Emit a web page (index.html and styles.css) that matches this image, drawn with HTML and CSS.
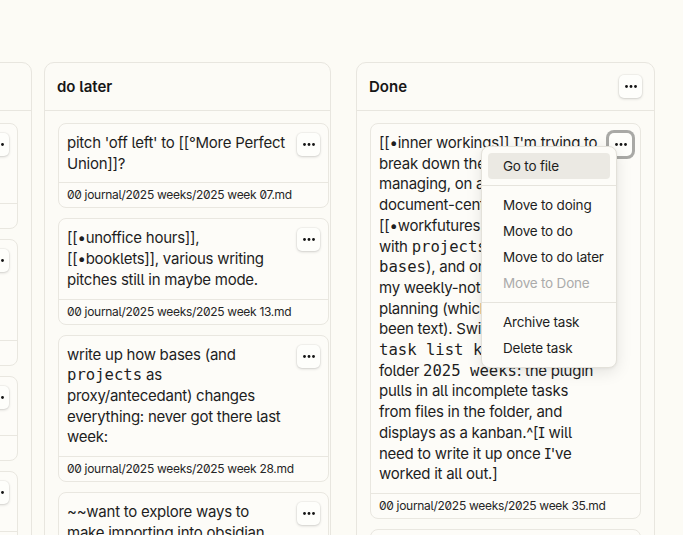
FILE: index.html
```html
<!DOCTYPE html>
<html lang="en">
<head>
<meta charset="utf-8">
<title>Task board</title>
<link rel="stylesheet" href="styles.css">
</head>
<body>
<div class="board">
  <section class="column col-wide">
    <header class="col-head"><h2 class="col-title">doing</h2></header>
    <div class="col-body">
      <article class="card">
        <div class="card-main">
          <p class="task-text">draft the outline for the next newsletter issue and send to editor</p>
          <button class="dots" aria-label="Task menu"><svg width="12" height="3" viewBox="0 0 12 3"><circle cx="1.5" cy="1.5" r="1.4"/><circle cx="6" cy="1.5" r="1.4"/><circle cx="10.5" cy="1.5" r="1.4"/></svg></button>
        </div>
        <div class="card-path">00 journal/2025 weeks/2025 week 30.md</div>
      </article>
      <article class="card">
        <div class="card-main">
          <p class="task-text">review the notes from the workshop and turn them into a short piece for the blog this month</p>
          <button class="dots" aria-label="Task menu"><svg width="12" height="3" viewBox="0 0 12 3"><circle cx="1.5" cy="1.5" r="1.4"/><circle cx="6" cy="1.5" r="1.4"/><circle cx="10.5" cy="1.5" r="1.4"/></svg></button>
        </div>
        <div class="card-path">00 journal/2025 weeks/2025 week 31.md</div>
      </article>
      <article class="card">
        <div class="card-main">
          <p class="task-text">tidy up the projects folder and archive the finished ones</p>
          <button class="dots" aria-label="Task menu"><svg width="12" height="3" viewBox="0 0 12 3"><circle cx="1.5" cy="1.5" r="1.4"/><circle cx="6" cy="1.5" r="1.4"/><circle cx="10.5" cy="1.5" r="1.4"/></svg></button>
        </div>
        <div class="card-path">00 journal/2025 weeks/2025 week 33.md</div>
      </article>
      <article class="card">
        <div class="card-main">
          <p class="task-text">follow up on the conference proposal</p>
          <button class="dots" aria-label="Task menu"><svg width="12" height="3" viewBox="0 0 12 3"><circle cx="1.5" cy="1.5" r="1.4"/><circle cx="6" cy="1.5" r="1.4"/><circle cx="10.5" cy="1.5" r="1.4"/></svg></button>
        </div>
        <div class="card-path">00 journal/2025 weeks/2025 week 34.md</div>
      </article>
    </div>
  </section>

  <section class="column col-narrow">
    <header class="col-head"><h2 class="col-title">do later</h2></header>
    <div class="col-body">
      <article class="card">
        <div class="card-main">
          <p class="task-text">pitch 'off left' to [[°More Perfect Union]]?</p>
          <button class="dots" aria-label="Task menu"><svg width="12" height="3" viewBox="0 0 12 3"><circle cx="1.5" cy="1.5" r="1.4"/><circle cx="6" cy="1.5" r="1.4"/><circle cx="10.5" cy="1.5" r="1.4"/></svg></button>
        </div>
        <div class="card-path">00 journal/2025 weeks/2025 week 07.md</div>
      </article>
      <article class="card">
        <div class="card-main">
          <p class="task-text">[[•unoffice hours]], [[•booklets]], various writing pitches still in maybe mode.</p>
          <button class="dots" aria-label="Task menu"><svg width="12" height="3" viewBox="0 0 12 3"><circle cx="1.5" cy="1.5" r="1.4"/><circle cx="6" cy="1.5" r="1.4"/><circle cx="10.5" cy="1.5" r="1.4"/></svg></button>
        </div>
        <div class="card-path">00 journal/2025 weeks/2025 week 13.md</div>
      </article>
      <article class="card">
        <div class="card-main">
          <p class="task-text">write up how bases (and <code>projects</code> as proxy/antecedant) changes everything: never got there last week:</p>
          <button class="dots" aria-label="Task menu"><svg width="12" height="3" viewBox="0 0 12 3"><circle cx="1.5" cy="1.5" r="1.4"/><circle cx="6" cy="1.5" r="1.4"/><circle cx="10.5" cy="1.5" r="1.4"/></svg></button>
        </div>
        <div class="card-path">00 journal/2025 weeks/2025 week 28.md</div>
      </article>
      <article class="card">
        <div class="card-main">
          <p class="task-text">~~want to explore ways to make importing into obsidian easier for the notes I keep elsewhere~~</p>
          <button class="dots" aria-label="Task menu"><svg width="12" height="3" viewBox="0 0 12 3"><circle cx="1.5" cy="1.5" r="1.4"/><circle cx="6" cy="1.5" r="1.4"/><circle cx="10.5" cy="1.5" r="1.4"/></svg></button>
        </div>
        <div class="card-path">00 journal/2025 weeks/2025 week 29.md</div>
      </article>
    </div>
  </section>

  <section class="column col-wide">
    <header class="col-head">
      <h2 class="col-title">Done</h2>
      <button class="dots" aria-label="Column menu"><svg width="12" height="3" viewBox="0 0 12 3"><circle cx="1.5" cy="1.5" r="1.4"/><circle cx="6" cy="1.5" r="1.4"/><circle cx="10.5" cy="1.5" r="1.4"/></svg></button>
    </header>
    <div class="col-body">
      <article class="card card-open">
        <div class="card-main">
          <p class="task-text task-lines">[[•inner workings]] I'm trying to<br>break down the work I'm<br>managing, on a more<br>document-centric basis<br>[[•workfutures.io]], and<br>with <code>projects</code> (and<br><code>bases</code>), and on<br>my weekly-notes<br>planning (which has<br>been text). Switched to<br><code>task list kanban</code> in<br>folder <code>2025 weeks</code>: the plugin<br>pulls in all incomplete tasks<br>from files in the folder, and<br>displays as a kanban.^[I will<br>need to write it up once I've<br>worked it all out.]</p>
          <button class="dots dots-focus" aria-label="Task menu"><svg width="12" height="3" viewBox="0 0 12 3"><circle cx="1.5" cy="1.5" r="1.4"/><circle cx="6" cy="1.5" r="1.4"/><circle cx="10.5" cy="1.5" r="1.4"/></svg></button>
        </div>
        <div class="card-path">00 journal/2025 weeks/2025 week 35.md</div>
        <ul class="menu" role="menu">
          <li class="menu-item is-active">Go to file</li>
          <li class="menu-sep"></li>
          <li class="menu-item">Move to doing</li>
          <li class="menu-item">Move to do</li>
          <li class="menu-item">Move to do later</li>
          <li class="menu-item is-disabled">Move to Done</li>
          <li class="menu-sep"></li>
          <li class="menu-item">Archive task</li>
          <li class="menu-item">Delete task</li>
        </ul>
      </article>
      <article class="card">
        <div class="card-main">
          <p class="task-text">set up the weekly review template</p>
          <button class="dots" aria-label="Task menu"><svg width="12" height="3" viewBox="0 0 12 3"><circle cx="1.5" cy="1.5" r="1.4"/><circle cx="6" cy="1.5" r="1.4"/><circle cx="10.5" cy="1.5" r="1.4"/></svg></button>
        </div>
        <div class="card-path">00 journal/2025 weeks/2025 week 36.md</div>
      </article>
    </div>
  </section>
</div>
</body>
</html>
```

FILE: styles.css
```css
* { box-sizing: border-box; }

html, body {
  margin: 0;
  padding: 0;
  height: 535px;
  overflow: hidden;
  background: #fcfbf5;
}

body {
  font-family: Inter, "Noto Sans", sans-serif;
  font-feature-settings: "cv05", "cv08", "zero";
  color: #1e1e1e;
}

.board {
  display: flex;
  align-items: flex-start;
  gap: 12px;
  padding-top: 62px;
  margin-left: -267px;
}

.column {
  flex: none;
  background: #fcfbf6;
  border: 1px solid #e8e6df;
  border-radius: 10px;
  min-height: 620px;
}

.col-wide { width: 299px; }
.col-narrow { width: 287px; margin-right: 13px; }

.col-head {
  height: 48px;
  display: flex;
  align-items: center;
  justify-content: space-between;
  padding: 0 12px 0 12px;
  border-bottom: 1px solid #e8e6df;
}

.col-title {
  margin: 0;
  font-size: 15px;
  font-weight: 600;
  color: #161616;
}

.col-body {
  display: flex;
  flex-direction: column;
  gap: 10px;
  padding: 12px 13px;
}

.card {
  position: relative;
  width: 271px;
  flex: none;
  background: #fdfcf8;
  border: 1px solid #e9e7e0;
  border-radius: 8px;
}

.card-main {
  display: flex;
  align-items: flex-start;
  gap: 8px;
  padding: 9px 8px 8px 8px;
}

.task-text {
  flex: 1;
  min-width: 0;
  margin: 0;
  font-size: 15px;
  line-height: 20.7px;
  letter-spacing: -0.25px;
  color: #1e1e1e;
}

.task-lines { white-space: nowrap; }

.task-text code {
  font-family: "DejaVu Sans Mono", "Liberation Mono", monospace;
  font-size: 15.6px;
  line-height: 1;
  letter-spacing: 0;
  color: #1e1e1e;
}

.dots {
  flex: none;
  width: 23px;
  height: 23px;
  margin-top: 0;
  padding: 0;
  border: 0;
  border-radius: 5px;
  background: #fefefb;
  box-shadow: 0 1px 3px rgba(0, 0, 0, 0.16), 0 0 0 1px rgba(0, 0, 0, 0.03);
  display: grid;
  place-items: center;
  cursor: pointer;
}

.dots svg { fill: #141414; display: block; }

.dots-focus {
  box-shadow: 0 0 0 3px #a9a9a6;
}

.card-path {
  border-top: 1px solid #e9e7e0;
  padding: 4px 8px 5px 8px;
  font-size: 12px;
  line-height: 15px;
  letter-spacing: -0.3px;
  color: #262626;
  white-space: nowrap;
  overflow: hidden;
}

.menu {
  position: absolute;
  left: 110px;
  top: 22px;
  width: 136px;
  margin: 0;
  padding: 6px;
  list-style: none;
  background: #fdfcf8;
  border: 1px solid #e3e1da;
  border-radius: 8px;
  box-shadow: 0 4px 16px rgba(0, 0, 0, 0.1), 0 1px 3px rgba(0, 0, 0, 0.05);
  z-index: 5;
}

.menu-item {
  height: 26px;
  line-height: 26px;
  padding-left: 15px;
  font-size: 13.5px;
  letter-spacing: -0.2px;
  color: #1e1e1e;
  border-radius: 4px;
  white-space: nowrap;
}

.menu-item.is-active { background: #ebe9e3; }
.menu-item.is-disabled { color: #ababab; }

.menu-sep {
  height: 1px;
  margin: 6px -6px;
  background: #e6e4dd;
}
```
